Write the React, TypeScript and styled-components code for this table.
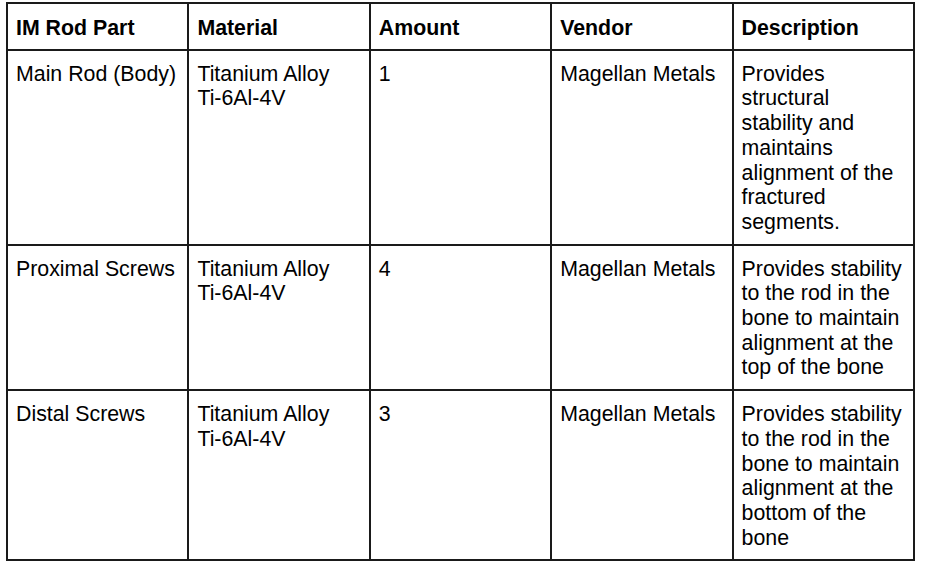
import styled, { createGlobalStyle } from 'styled-components';

const GlobalStyle = createGlobalStyle`
	html, body {
		margin: 0;
		padding: 0;
		background: #fff;
	}
`;

const rows = [
	{
		part: 'Main Rod (Body)',
		material: ['Titanium Alloy', 'Ti-6Al-4V'],
		amount: '1',
		vendor: 'Magellan Metals',
		description: 'Provides structural stability and maintains alignment of the fractured segments.'
	},
	{
		part: 'Proximal Screws',
		material: ['Titanium Alloy', 'Ti-6Al-4V'],
		amount: '4',
		vendor: 'Magellan Metals',
		description: 'Provides stability to the rod in the bone to maintain alignment at the top of the bone'
	},
	{
		part: 'Distal Screws',
		material: ['Titanium Alloy', 'Ti-6Al-4V'],
		amount: '3',
		vendor: 'Magellan Metals',
		description: 'Provides stability to the rod in the bone to maintain alignment at the bottom of the bone'
	}
];

const headers = ['IM Rod Part', 'Material', 'Amount', 'Vendor', 'Description'];

const Page = styled.div`
	padding: 2px 0 0 6px;
`;

const Table = styled.table`
	width: 909px;
	table-layout: fixed;
	border-collapse: collapse;
	font-family: 'Liberation Sans', Arial, sans-serif;
	font-size: 21.33px;
	line-height: 24.7px;
	color: #000;
`;

const Cell = styled.td<{ $head?: boolean }>`
	border: 2px solid #1a1a1a;
	padding: ${(p) => (p.$head ? '12px 8px 8px 8px' : '11px 8px 9px 8px')};
	vertical-align: top;
	text-align: left;
	font-weight: ${(p) => (p.$head ? 700 : 400)};
	word-wrap: break-word;
`;

const Line = styled.div``;

export default function App() {
	return (
		<>
			<GlobalStyle />
			<Page>
				<Table>
					<thead>
						<tr>
							{headers.map((h) => (
								<Cell as="th" $head key={h}>
									{h}
								</Cell>
							))}
						</tr>
					</thead>
					<tbody>
						{rows.map((r) => (
							<tr key={r.part}>
								<Cell>{r.part}</Cell>
								<Cell>
									{r.material.map((m) => (
										<Line key={m}>{m}</Line>
									))}
								</Cell>
								<Cell>{r.amount}</Cell>
								<Cell>{r.vendor}</Cell>
								<Cell>{r.description}</Cell>
							</tr>
						))}
					</tbody>
				</Table>
			</Page>
		</>
	);
}
